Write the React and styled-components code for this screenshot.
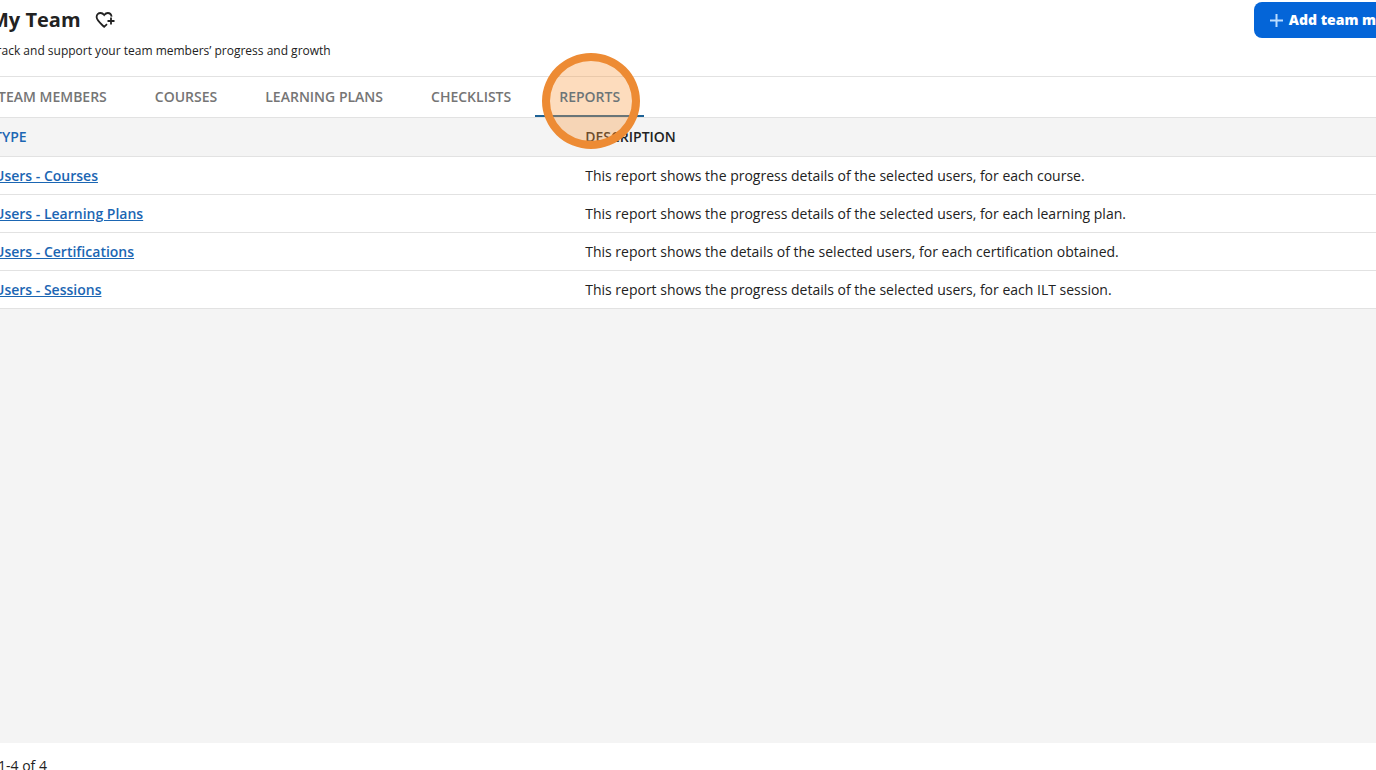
import React from 'react'
import styled, { createGlobalStyle } from 'styled-components'

const GlobalStyle = createGlobalStyle`
  * {
    box-sizing: border-box;
  }

  body {
    margin: 0;
    overflow: hidden;
    background: #fff;
    color: #222;
    font-family: 'Open Sans', 'Noto Sans', sans-serif;
    font-size: 14px;
    line-height: 20px;
  }
`

const Viewport = styled.div`
  overflow: hidden;
  height: 100vh;
`

// The page is scrolled a little, so it runs past the window on three sides
const Page = styled.div`
  display: flex;
  flex-direction: column;
  height: calc(100vh + 18px);
  margin: 0 -72px 0 -30px;
`

const Header = styled.header`
  display: flex;
  align-items: flex-start;
  justify-content: space-between;
  height: 77px;
  padding: 2px 9px 0 20px;
  border-bottom: 1px solid #e2e2e2;
`

const TitleRow = styled.div`
  display: flex;
  align-items: center;
  gap: 14px;
  height: 36px;
`

const Title = styled.h1`
  margin: 0;
  font-size: 20px;
  font-weight: 700;
  line-height: 28px;
`

const Subtitle = styled.p`
  margin: 3px 0 0;
  font-size: 12px;
  line-height: 20px;
`

const IconButton = styled.button`
  display: flex;
  padding: 0;
  border: 0;
  background: none;
  color: #222;
`

const AddButton = styled.button`
  display: flex;
  align-items: center;
  gap: 6px;
  height: 36px;
  padding: 0 16px;
  border: 0;
  border-radius: 8px;
  background: #0465d8;
  color: #fff;
  font: inherit;
  font-weight: 800;
  white-space: nowrap;
`

const Tabs = styled.nav`
  display: flex;
  height: 40px;
  padding-left: 4px;
`

const Tab = styled.a`
  position: relative;
  display: flex;
  align-items: center;
  padding: 0 24px;
  color: ${props => (props.$active ? '#1d6296' : '#757575')};
  box-shadow: ${props => (props.$active ? 'inset 0 -2px #1d6296' : 'none')};
  font-weight: 600;
  text-decoration: none;
  white-space: nowrap;
`

const Highlight = styled.span`
  position: absolute;
  z-index: 1;
  top: 50%;
  left: 50%;
  width: 98px;
  height: 96px;
  margin: 4px 0 0 1px;
  border: 8px solid #ed8b34;
  border-radius: 50%;
  background: rgba(250, 155, 65, 0.35);
  transform: translate(-50%, -50%);
  pointer-events: none;
`

const Content = styled.main`
  flex: 1;
  border-top: 1px solid #e2e2e2;
  background: #f4f4f4;
`

const Table = styled.table`
  width: 100%;
  border-spacing: 0;
  table-layout: fixed;
`

const HeadCell = styled.th`
  width: ${props => props.$width || 'auto'};
  height: 39px;
  padding: 0 24px;
  border-bottom: 1px solid #e2e2e2;
  color: ${props => (props.$sorted ? '#1b66b3' : '#222')};
  font-weight: 600;
  text-align: left;
`

const Cell = styled.td`
  height: 38px;
  padding: 0 24px;
  border-bottom: 1px solid #e2e2e2;
  background: #fff;
`

const ReportLink = styled.a`
  color: #1b66b3;
  font-weight: 600;
  text-decoration: underline;
`

const Footer = styled.footer`
  display: flex;
  align-items: center;
  height: 45px;
  padding: 0 28px;
`

const HeartPlus = () => (
  <svg width="20" height="20" viewBox="0 0 20 20" fill="none" stroke="currentColor" strokeWidth="1.8">
    <path d="M16.6 6.6C16.2 4.4 14.7 3 12.8 3C11.3 3 10.1 3.9 9.2 5C8.3 3.9 7.1 3 5.6 3C3.3 3 1.6 4.8 1.6 7.1C1.6 10.5 5.3 13.2 9.2 16.8L12 14.2" />
    <path d="M16 7.5v7M12.5 11h7" />
  </svg>
)

const Plus = () => (
  <svg width="13" height="13" viewBox="0 0 13 13" stroke="#b9dcff" strokeWidth="2">
    <path d="M6.5 0v13M0 6.5h13" />
  </svg>
)

const tabs = ['TEAM MEMBERS', 'COURSES', 'LEARNING PLANS', 'CHECKLISTS', 'REPORTS']

const reports = [
  {
    type: 'Users - Courses',
    description: 'This report shows the progress details of the selected users, for each course.',
  },
  {
    type: 'Users - Learning Plans',
    description: 'This report shows the progress details of the selected users, for each learning plan.',
  },
  {
    type: 'Users - Certifications',
    description: 'This report shows the details of the selected users, for each certification obtained.',
  },
  {
    type: 'Users - Sessions',
    description: 'This report shows the progress details of the selected users, for each ILT session.',
  },
]

const PageHeader = () => (
  <Header>
    <div>
      <TitleRow>
        <Title>My Team</Title>
        <IconButton aria-label="Add to favorites">
          <HeartPlus />
        </IconButton>
      </TitleRow>
      <Subtitle>Track and support your team members’ progress and growth</Subtitle>
    </div>
    <AddButton>
      <Plus />
      Add team member
    </AddButton>
  </Header>
)

const ReportsTable = () => (
  <Table>
    <thead>
      <tr>
        <HeadCell $width="40%" $sorted>TYPE</HeadCell>
        <HeadCell>DESCRIPTION</HeadCell>
      </tr>
    </thead>
    <tbody>
      {reports.map(({ type, description }) => (
        <tr key={type}>
          <Cell>
            <ReportLink href="#">{type}</ReportLink>
          </Cell>
          <Cell>{description}</Cell>
        </tr>
      ))}
    </tbody>
  </Table>
)

const App = () => (
  <Viewport>
    <GlobalStyle />
    <Page>
      <PageHeader />
      <Tabs>
        {tabs.map(tab => (
          <Tab key={tab} href="#" $active={tab === 'REPORTS'}>
            {tab}
            {tab === 'REPORTS' && <Highlight />}
          </Tab>
        ))}
      </Tabs>
      <Content>
        <ReportsTable />
      </Content>
      <Footer>1-4 of 4</Footer>
    </Page>
  </Viewport>
)

export default App
